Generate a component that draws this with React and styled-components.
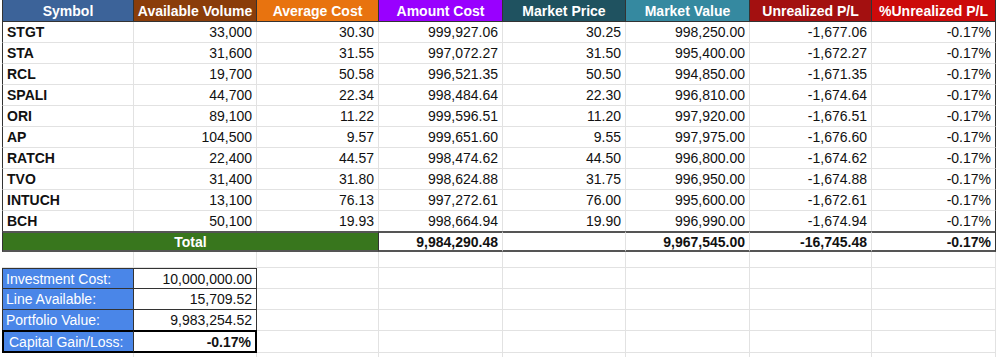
import styled, { createGlobalStyle } from "styled-components";

const GlobalStyle = createGlobalStyle`
  body {
    margin: 0;
    background: #fff;
    font-family: "Liberation Sans", Arial, sans-serif;
  }
`;

const COLS = "132px 123px 122px 124px 123px 124px 122px 124px";

const Sheet = styled.div`
  display: grid;
  grid-template-columns: ${COLS};
  grid-template-rows: 22px repeat(10, 21px) 20px 16px 21px 21px 21px 22px 10px;
  padding-left: 2px;
  width: 1000px;
  height: 357px;
  overflow: hidden;
  box-sizing: border-box;
`;

const Cell = styled.div`
  box-sizing: border-box;
  display: flex;
  align-items: center;
  justify-content: ${(p) =>
    p.$align === "left" ? "flex-start" : p.$align === "center" ? "center" : "flex-end"};
  padding: 0 4px;
  font-size: 14px;
  color: #111;
  white-space: nowrap;
  overflow: hidden;
  border-right: 1px solid ${(p) => (p.$edge ? "#333" : "#e2e2e2")};
  border-bottom: 1px solid #e2e2e2;
  border-left: ${(p) => (p.$first ? "1px solid #333" : "none")};
  font-weight: ${(p) => (p.$bold ? "bold" : "normal")};
`;

const HeadCell = styled(Cell)`
  background: ${(p) => p.$bg};
  color: #fff;
  font-weight: bold;
  justify-content: center;
  border-right: 1px solid #333;
  border-bottom: 1px solid #333;
`;

const TotalCell = styled(Cell)`
  font-weight: bold;
  border-top: 2px solid #555;
  border-bottom: 2px solid #555;
  margin-top: -1px;
`;

const TotalLabel = styled(TotalCell)`
  grid-column: span 3;
  background: #38761d;
  color: #fff;
  justify-content: center;
  border-right: 1px solid #333;
`;

const Label = styled(Cell)`
  background: #4a86e8;
  color: #fff;
  justify-content: flex-start;
  padding-left: 3px;
  border-left: 1px solid #333;
  border-right: 1px solid #333;
  border-bottom: 1px solid #333;
  border-top: ${(p) => (p.$top ? "1px solid #333" : "none")};
`;

const Value = styled(Cell)`
  border-right: 1px solid #333;
  border-bottom: 1px solid #333;
  border-top: ${(p) => (p.$top ? "1px solid #333" : "none")};
  color: #111;
`;

const StrongLabel = styled(Label)`
  border: 2px solid #000;
  border-right: 1px solid #333;
  margin-top: -1px;
  padding-left: 5px;
`;

const StrongValue = styled(Value)`
  border: 2px solid #000;
  border-left: none;
  font-weight: bold;
  margin-top: -1px;
`;

const headers = [
  ["Symbol", "#3c6399"],
  ["Available Volume", "#8a3d0a"],
  ["Average Cost", "#e8730f"],
  ["Amount Cost", "#9900ff"],
  ["Market Price", "#1f5260"],
  ["Market Value", "#3589a0"],
  ["Unrealized P/L", "#a31010"],
  ["%Unrealized P/L", "#cc0a0a"],
];

const rows = [
  ["STGT", "33,000", "30.30", "999,927.06", "30.25", "998,250.00", "-1,677.06", "-0.17%"],
  ["STA", "31,600", "31.55", "997,072.27", "31.50", "995,400.00", "-1,672.27", "-0.17%"],
  ["RCL", "19,700", "50.58", "996,521.35", "50.50", "994,850.00", "-1,671.35", "-0.17%"],
  ["SPALI", "44,700", "22.34", "998,484.64", "22.30", "996,810.00", "-1,674.64", "-0.17%"],
  ["ORI", "89,100", "11.22", "999,596.51", "11.20", "997,920.00", "-1,676.51", "-0.17%"],
  ["AP", "104,500", "9.57", "999,651.60", "9.55", "997,975.00", "-1,676.60", "-0.17%"],
  ["RATCH", "22,400", "44.57", "998,474.62", "44.50", "996,800.00", "-1,674.62", "-0.17%"],
  ["TVO", "31,400", "31.80", "998,624.88", "31.75", "996,950.00", "-1,674.88", "-0.17%"],
  ["INTUCH", "13,100", "76.13", "997,272.61", "76.00", "995,600.00", "-1,672.61", "-0.17%"],
  ["BCH", "50,100", "19.93", "998,664.94", "19.90", "996,990.00", "-1,674.94", "-0.17%"],
];

const totals = ["9,984,290.48", "", "9,967,545.00", "-16,745.48", "-0.17%"];

const summary = [
  ["Investment Cost:", "10,000,000.00"],
  ["Line Available:", "15,709.52"],
  ["Portfolio Value:", "9,983,254.52"],
];

const blanks = (n, key) =>
  Array.from({ length: n }, (_, i) => <Cell key={`${key}-${i}`} />);

function App() {
  return (
    <>
      <GlobalStyle />
      <Sheet>
        {headers.map(([h, bg], i) => (
          <HeadCell key={h} $bg={bg} $first={i === 0}>
            {h}
          </HeadCell>
        ))}

        {rows.map((r) =>
          r.map((v, i) => (
            <Cell
              key={r[0] + i}
              $align={i === 0 ? "left" : "right"}
              $bold={i === 0}
              $first={i === 0}
              $edge={i === 7}
            >
              {v}
            </Cell>
          ))
        )}

        <TotalLabel $first>Total</TotalLabel>
        {totals.map((v, i) => (
          <TotalCell key={"t" + i} $edge={i === 4}>
            {v}
          </TotalCell>
        ))}

        {blanks(8, "gap")}

        {summary.map(([l, v], i) => [
          <Label key={l} $top={i === 0}>
            {l}
          </Label>,
          <Value key={l + "v"} $top={i === 0}>
            {v}
          </Value>,
          ...blanks(6, l),
        ])}

        <StrongLabel>Capital Gain/Loss:</StrongLabel>
        <StrongValue>-0.17%</StrongValue>
        {blanks(6, "cap")}

        {blanks(8, "end")}
      </Sheet>
    </>
  );
}

export default App;
